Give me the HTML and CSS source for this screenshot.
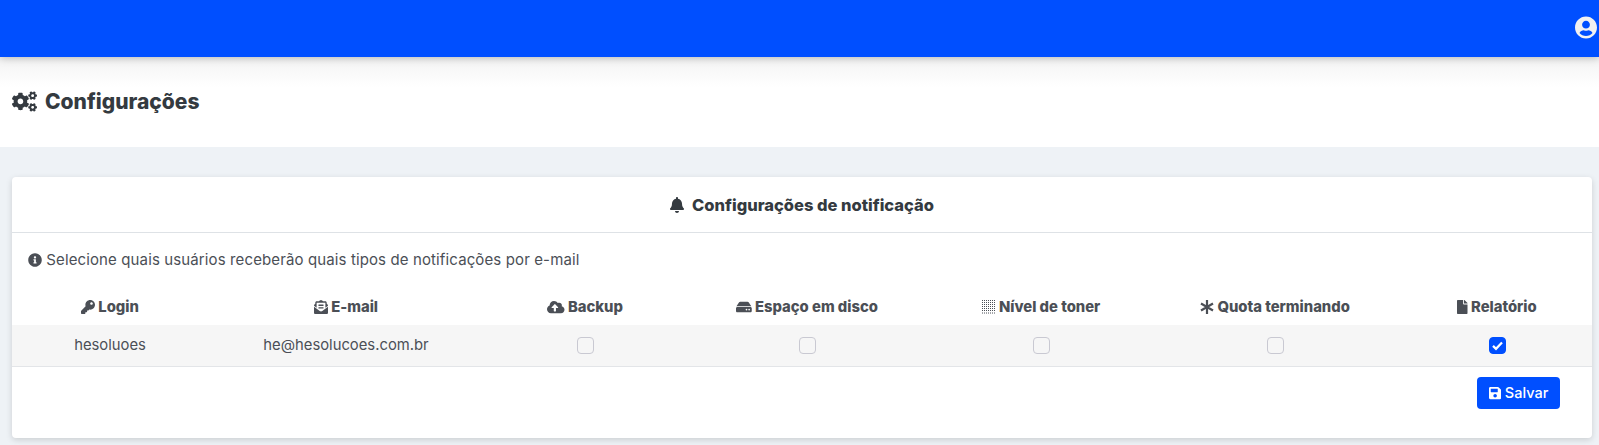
FILE: index.html
```html
<!DOCTYPE html>
<html lang="pt-br">
<head>
  <meta charset="UTF-8">
  <title>Configurações</title>
  <link rel="stylesheet" href="styles.css">
</head>
<body>

  <header class="hs-topbar">
    <svg class="hs-topbar__user" viewBox="0 0 496 512"><path fill="currentColor" d="M248 8C111 8 0 119 0 256s111 248 248 248 248-111 248-248S385 8 248 8zm0 96c48.600 0 88 39.400 88 88s-39.400 88-88 88-88-39.400-88-88 39.400-88 88-88zm0 344c-58.700 0-111.300-26.600-146.500-68.200 18.800-35.400 55.600-59.800 98.500-59.800 2.400 0 4.800.4 7.100 1.100 13 4.200 26.600 6.900 40.900 6.900 14.300 0 28-2.700 40.900-6.900 2.300-.7 4.700-1.100 7.100-1.100 42.900 0 79.700 24.400 98.500 59.800C359.300 421.400 306.700 448 248 448z"/></svg>
  </header>

  <section class="hs-page-title">
    <svg class="hs-page-title__icon" viewBox="0 0 640 512"><path fill="currentColor" d="M512.100 191l-8.200 14.300c-3 5.300-9.400 7.500-15.100 5.400-11.800-4.400-22.600-10.700-32.100-18.600-4.600-3.800-5.800-10.500-2.800-15.700l8.200-14.300c-6.900-8-12.300-17.300-15.900-27.400h-16.500c-6 0-11.200-4.300-12.200-10.300-2-12-2.100-24.600 0-37.100 1-6 6.200-10.400 12.200-10.400h16.500c3.600-10.100 9-19.400 15.900-27.400l-8.200-14.300c-3-5.200-1.900-11.900 2.800-15.700 9.500-7.900 20.400-14.200 32.100-18.600 5.700-2.100 12.100.1 15.100 5.400l8.200 14.300c10.500-1.900 21.200-1.900 31.700 0L552 6.300c3-5.300 9.400-7.500 15.100-5.400 11.800 4.400 22.600 10.700 32.100 18.600 4.600 3.800 5.800 10.500 2.800 15.700l-8.200 14.300c6.900 8 12.300 17.300 15.900 27.400h16.500c6 0 11.200 4.300 12.200 10.300 2 12 2.100 24.600 0 37.100-1 6-6.200 10.400-12.200 10.400h-16.500c-3.600 10.100-9 19.400-15.900 27.400l8.200 14.300c3 5.200 1.900 11.900-2.800 15.700-9.500 7.900-20.400 14.200-32.100 18.600-5.700 2.100-12.100-.1-15.100-5.400l-8.200-14.300c-10.400 1.900-21.200 1.900-31.700 0zm-10.500-58.800c38.500 29.600 82.400-14.300 52.800-52.800-38.500-29.700-82.400 14.300-52.800 52.800zM386.300 286.100l33.700 16.800c10.100 5.800 14.500 18.100 10.500 29.100-8.900 24.200-26.400 46.400-42.600 65.800-7.400 8.900-20.200 11.100-30.300 5.300l-29.100-16.800c-16 13.700-34.600 24.600-54.900 31.700v33.600c0 11.600-8.300 21.600-19.700 23.600-24.600 4.200-50.400 4.400-75.900 0-11.500-2-20-11.900-20-23.600V418c-20.300-7.200-38.900-18-54.900-31.700L74 403c-10 5.800-22.900 3.600-30.300-5.300-16.200-19.400-33.300-41.600-42.200-65.700-4-10.900.4-23.200 10.500-29.100l33.300-16.800c-3.900-20.900-3.900-42.400 0-63.400L12 205.800c-10.100-5.800-14.600-18.100-10.500-29 8.900-24.200 26-46.400 42.200-65.800 7.400-8.900 20.200-11.100 30.300-5.300l29.100 16.800c16-13.700 34.600-24.600 54.900-31.700V57.100c0-11.500 8.200-21.500 19.600-23.500 24.600-4.200 50.500-4.400 76-.1 11.500 2 20 11.900 20 23.600v33.600c20.300 7.200 38.900 18 54.900 31.700l29.100-16.800c10-5.800 22.900-3.600 30.300 5.300 16.200 19.400 33.200 41.600 42.100 65.800 4 10.900.1 23.200-10 29.100l-33.700 16.800c3.900 21 3.900 42.500 0 63.500zm-117.600 21.100c59.200-77-28.700-164.900-105.700-105.700-59.200 77 28.700 164.900 105.700 105.700zm243.400 182.700l-8.200 14.300c-3 5.300-9.400 7.500-15.100 5.400-11.800-4.400-22.600-10.700-32.100-18.600-4.600-3.800-5.800-10.500-2.800-15.700l8.200-14.300c-6.900-8-12.300-17.300-15.900-27.400h-16.500c-6 0-11.200-4.300-12.200-10.300-2-12-2.100-24.600 0-37.100 1-6 6.200-10.400 12.200-10.400h16.500c3.600-10.100 9-19.400 15.900-27.400l-8.200-14.300c-3-5.200-1.900-11.900 2.800-15.700 9.500-7.900 20.400-14.200 32.100-18.600 5.700-2.100 12.100.1 15.100 5.400l8.200 14.300c10.500-1.900 21.200-1.900 31.700 0l8.200-14.300c3-5.300 9.400-7.500 15.100-5.400 11.800 4.400 22.600 10.700 32.100 18.600 4.600 3.800 5.800 10.500 2.800 15.700l-8.200 14.300c6.900 8 12.300 17.300 15.900 27.400h16.500c6 0 11.200 4.300 12.200 10.300 2 12 2.100 24.600 0 37.100-1 6-6.200 10.400-12.200 10.400h-16.500c-3.600 10.100-9 19.400-15.900 27.400l8.200 14.300c3 5.200 1.900 11.900-2.800 15.700-9.500 7.900-20.400 14.200-32.100 18.600-5.700 2.100-12.100-.1-15.100-5.400l-8.200-14.300c-10.400 1.900-21.200 1.900-31.700 0zM501.600 431c38.500 29.600 82.400-14.300 52.800-52.800-38.500-29.600-82.400 14.300-52.800 52.800z"/></svg>
    <h1 class="hs-page-title__text">Configurações</h1>
  </section>

  <main class="hs-content">
    <div class="hs-card">
      <div class="hs-card__header">
        <svg class="hs-icon hs-icon--bell" viewBox="0 0 448 512"><path fill="currentColor" d="M224 512c35.320 0 63.970-28.650 63.970-64H160.030c0 35.350 28.650 64 63.970 64zm215.390-149.710c-19.320-20.760-55.470-51.990-55.470-154.290 0-77.700-54.480-139.900-127.940-155.160V32c0-17.670-14.320-32-31.980-32s-31.980 14.330-31.980 32v20.840C118.560 68.100 64.080 130.300 64.080 208c0 102.300-36.150 133.530-55.470 154.290-6 6.450-8.660 14.160-8.610 21.710.11 16.400 12.980 32 32.100 32h383.800c19.120 0 32-15.600 32.100-32 .05-7.550-2.610-15.270-8.610-21.710z"/></svg>
        <h2 class="hs-card__title">Configurações de notificação</h2>
      </div>

      <p class="hs-hint">
        <svg class="hs-icon hs-icon--info" viewBox="0 0 512 512"><path fill="currentColor" d="M256 8C119 8 8 119 8 256s111 248 248 248 248-111 248-248S393 8 256 8zm0 110c23.200 0 42 18.800 42 42s-18.800 42-42 42-42-18.800-42-42 18.800-42 42-42zm56 254c0 6.600-5.400 12-12 12h-88c-6.600 0-12-5.400-12-12v-24c0-6.600 5.400-12 12-12h12v-64h-12c-6.600 0-12-5.400-12-12v-24c0-6.600 5.400-12 12-12h64c6.600 0 12 5.400 12 12v100h12c6.600 0 12 5.400 12 12v24z"/></svg>
        Selecione quais usuários receberão quais tipos de notificações por e-mail
      </p>

      <table class="hs-table">
        <colgroup>
          <col class="hs-col-login">
          <col class="hs-col-email">
          <col class="hs-col-backup">
          <col class="hs-col-disco">
          <col class="hs-col-toner">
          <col class="hs-col-quota">
          <col>
        </colgroup>
        <thead>
          <tr>
            <th><svg class="hs-icon" viewBox="0 0 512 512"><path fill="currentColor" d="M512 176.001C512 273.203 433.202 352 336 352c-11.220 0-22.190-1.062-32.827-3.069l-24.012 27.014A23.999 23.999 0 0 1 261.223 384H224v40c0 13.255-10.745 24-24 24h-40v40c0 13.255-10.745 24-24 24H24c-13.255 0-24-10.745-24-24v-78.059c0-6.365 2.529-12.470 7.029-16.971l161.802-161.802C163.108 213.814 160 195.271 160 176 160 78.798 238.797.001 335.999 0 433.488-.001 512 78.511 512 176.001zM336 128c0 26.510 21.490 48 48 48s48-21.490 48-48-21.490-48-48-48-48 21.490-48 48z"/></svg> Login</th>
            <th><svg class="hs-icon" viewBox="0 0 512 512"><path fill="currentColor" d="M176 216h160c8.840 0 16-7.160 16-16v-16c0-8.840-7.160-16-16-16H176c-8.840 0-16 7.160-16 16v16c0 8.840 7.160 16 16 16zm-16 80c0 8.840 7.160 16 16 16h160c8.840 0 16-7.160 16-16v-16c0-8.840-7.160-16-16-16H176c-8.840 0-16 7.160-16 16v16zm96 121.130c-16.420 0-32.840-5.060-46.860-15.190L0 250.860V464c0 26.510 21.490 48 48 48h416c26.510 0 48-21.490 48-48V250.860L302.860 401.940c-14.020 10.120-30.440 15.190-46.860 15.190zm237.610-254.180c-8.850-6.940-17.240-13.470-29.610-22.810V96c0-26.510-21.490-48-48-48h-77.550c-3.040-2.200-5.870-4.260-9.040-6.560C312.600 29.170 279.200-.35 256 0c-23.200-.35-56.590 29.170-73.410 41.440-3.170 2.300-6 4.360-9.040 6.560H96c-26.510 0-48 21.490-48 48v44.140c-12.370 9.330-20.760 15.870-29.610 22.810A47.995 47.995 0 0 0 0 200.720v10.650l96 69.350V96h320v184.720l96-69.350v-10.650c0-14.740-6.780-28.670-18.390-37.770z"/></svg> E-mail</th>
            <th><svg class="hs-icon" viewBox="0 0 640 512"><path fill="currentColor" d="M537.600 226.600c4.100-10.700 6.400-22.400 6.400-34.600 0-53-43-96-96-96-19.700 0-38.100 6-53.300 16.200C367 64.200 315.300 32 256 32c-88.400 0-160 71.600-160 160 0 2.700.1 5.400.2 8.100C40.200 219.800 0 273.200 0 336c0 79.500 64.500 144 144 144h368c70.700 0 128-57.300 128-128 0-61.900-44-113.600-102.400-125.400zM393.400 288H328v112c0 8.800-7.200 16-16 16h-48c-8.800 0-16-7.200-16-16V288h-65.400c-14.300 0-21.400-17.200-11.300-27.300l105.400-105.400c6.200-6.200 16.400-6.200 22.600 0l105.400 105.400c10.100 10.100 2.900 27.300-11.300 27.300z"/></svg> Backup</th>
            <th><svg class="hs-icon" viewBox="0 0 576 512"><path fill="currentColor" d="M576 304v96c0 26.510-21.490 48-48 48H48c-26.510 0-48-21.490-48-48v-96c0-26.510 21.490-48 48-48h480c26.510 0 48 21.490 48 48zm-48-80a79.557 79.557 0 0 1 30.777 6.165L462.470 85.700A48.004 48.004 0 0 0 422.529 64H153.471a48 48 0 0 0-39.941 21.380L17.223 230.165A79.557 79.557 0 0 1 48 224h480zm-48 96c-17.673 0-32 14.327-32 32s14.327 32 32 32 32-14.327 32-32-14.327-32-32-32zm-96 0c-17.673 0-32 14.327-32 32s14.327 32 32 32 32-14.327 32-32-14.327-32-32-32z"/></svg> Espaço em disco</th>
            <th><svg class="hs-icon" viewBox="0 0 14 14"><path fill="none" stroke="currentColor" stroke-dasharray="1 1" d="M0 .5h14M0 2.500h14M0 4.500h14M0 6.500h14M0 8.500h14M0 10.500h14M0 13h14"/></svg> Nível de toner</th>
            <th><svg class="hs-icon" viewBox="0 0 14 14"><path fill="none" stroke="currentColor" stroke-width="2.200" d="M7 0v14M1 3.500l12 7M1 10.500l12-7"/></svg> Quota terminando</th>
            <th class="hs-cell-last"><svg class="hs-icon" viewBox="0 0 384 512"><path fill="currentColor" d="M224 136V0H24C10.700 0 0 10.700 0 24v464c0 13.300 10.700 24 24 24h336c13.300 0 24-10.700 24-24V160H248c-13.200 0-24-10.800-24-24zm160-14.100v6.100H256V0h6.100c6.400 0 12.500 2.500 17 7l97.900 98c4.500 4.500 7 10.600 7 16.900z"/></svg> Relatório</th>
          </tr>
        </thead>
        <tbody>
          <tr>
            <td>hesoluoes</td>
            <td>he@hesolucoes.com.br</td>
            <td><input class="hs-check" type="checkbox"></td>
            <td><input class="hs-check" type="checkbox"></td>
            <td><input class="hs-check" type="checkbox"></td>
            <td><input class="hs-check" type="checkbox"></td>
            <td class="hs-cell-last"><input class="hs-check" type="checkbox" checked></td>
          </tr>
        </tbody>
      </table>

      <div class="hs-card__footer">
        <button class="hs-btn" type="button">
          <svg class="hs-icon" viewBox="0 0 448 512"><path fill="currentColor" d="M433.941 129.941l-83.882-83.882A48 48 0 0 0 316.118 32H48C21.490 32 0 53.490 0 80v352c0 26.510 21.490 48 48 48h352c26.510 0 48-21.490 48-48V163.882a48 48 0 0 0-14.059-33.941zM224 416c-35.346 0-64-28.654-64-64 0-35.346 28.654-64 64-64s64 28.654 64 64c0 35.346-28.654 64-64 64zm96-304.520V212c0 6.627-5.373 12-12 12H76c-6.627 0-12-5.373-12-12V108c0-6.627 5.373-12 12-12h228.520c3.183 0 6.235 1.264 8.485 3.515l3.480 3.480A11.996 11.996 0 0 1 320 111.480z"/></svg>
          Salvar
        </button>
      </div>
    </div>
  </main>

</body>
</html>
```

FILE: styles.css
```css
/* Root resets */
* { margin: 0; padding: 0; box-sizing: border-box; }
html, body { height: 100%; }
body { font-family: 'Inter', sans-serif; background-color: #eef2f6; color: #4b4f56; overflow: hidden; }

/* Top bar */
.hs-topbar {
  height: 57px;
  background-color: #004fff;
  display: flex;
  align-items: center;
  justify-content: flex-end;
  padding: 0 2px 3px 0;
  box-shadow: 0 1px 8px rgba(0, 0, 0, 0.25);
  position: relative;
}
.hs-topbar__user { width: 22px; height: 23px; color: #f1f1f1; }

/* Page title band */
.hs-page-title {
  height: 90px;
  background: linear-gradient(to bottom, #f3f3f3 0, #ffffff 30px);
  display: flex;
  align-items: center;
  gap: 8px;
  padding: 0 12px 1px;
  color: #343a40;
}
.hs-page-title__icon { width: 25px; height: 21px; }
.hs-page-title__text { font-size: 21px; font-weight: 800; line-height: 1; }

/* Content */
.hs-content { padding: 30px 7px 0 12px; }
.hs-card {
  height: 261px;
  background-color: #ffffff;
  border-radius: 4px;
  box-shadow: 0 2px 6px rgba(0, 0, 0, 0.15);
}
.hs-card__header {
  height: 56px;
  border-bottom: 1px solid #dee2e6;
  display: flex;
  align-items: center;
  justify-content: center;
  gap: 8px;
  color: #343a40;
}
.hs-card__title { font-size: 16.5px; font-weight: 800; }
.hs-icon { height: 14px; width: auto; vertical-align: -2px; }
.hs-icon--bell { height: 16px; }

.hs-hint { font-size: 15px; letter-spacing: 0.12px; padding: 18px 16px 0; line-height: 18px; height: 46px; }

/* Table */
.hs-table { width: 100%; border-collapse: collapse; table-layout: fixed; margin-top: 13px; font-size: 14.8px; }
.hs-col-login { width: 196px; }
.hs-col-email { width: 276px; }
.hs-col-backup { width: 202px; }
.hs-col-disco { width: 242px; }
.hs-col-toner { width: 226px; }
.hs-col-quota { width: 242px; }
.hs-table th { height: 33px; padding-bottom: 4px; font-size: 14.8px; font-weight: 800; text-align: center; vertical-align: middle; }
.hs-table tbody tr { background-color: #f6f6f6; }
.hs-table td { height: 41px; text-align: center; vertical-align: middle; border-bottom: 1px solid #e3e5e8; }
.hs-table .hs-cell-last { padding-left: 6px; }
.hs-check {
  appearance: none;
  display: block;
  margin: 0 auto;
  width: 17px;
  height: 17px;
  background-color: #f6f6f6;
  border: 1px solid #c9c9d2;
  border-radius: 4px;
}
.hs-check:checked {
  background: #004fff url("data:image/svg+xml,%3Csvg xmlns='http://www.w3.org/2000/svg' viewBox='0 0 20 20'%3E%3Cpath fill='none' stroke='white' stroke-width='3' d='M4 10.500l4 4 8-8.500'/%3E%3C/svg%3E") center / 100% no-repeat;
  border-color: #004fff;
}

/* Footer */
.hs-card__footer { display: flex; justify-content: flex-end; padding: 10px 32px 0 0; }
.hs-btn {
  width: 83px;
  height: 32px;
  background-color: #004fff;
  color: #ffffff;
  border: none;
  border-radius: 4px;
  font-family: inherit;
  font-size: 14.5px;
  font-weight: 500;
}
```
